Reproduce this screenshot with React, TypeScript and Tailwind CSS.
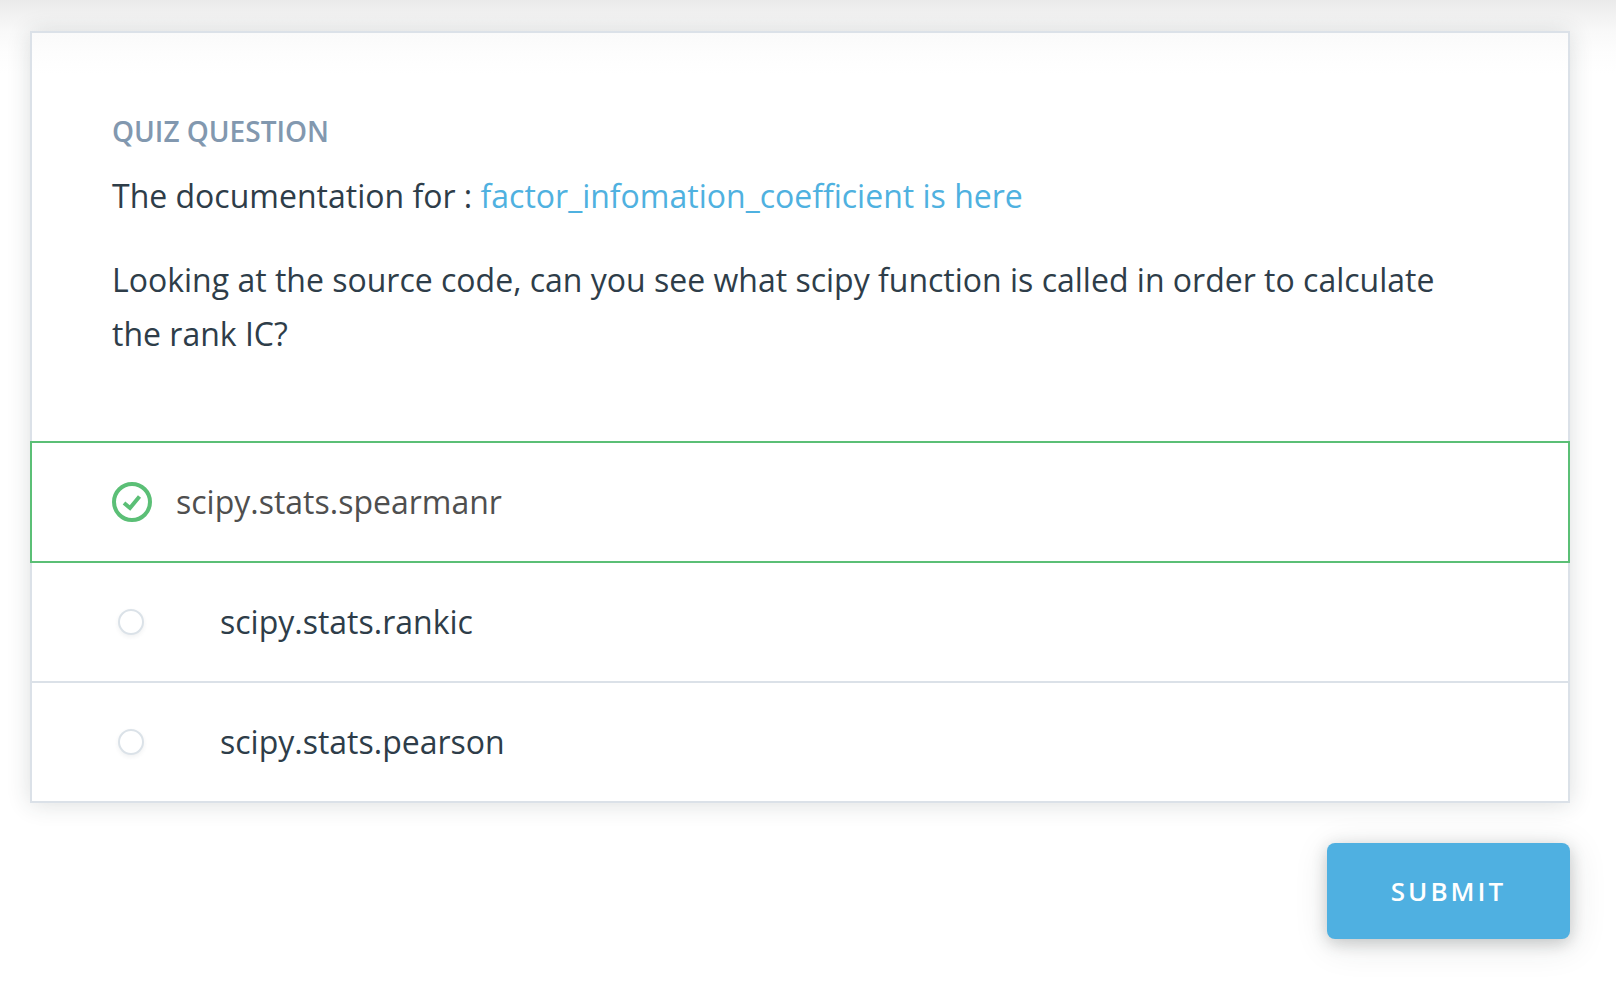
import React from "react";

const options = ["scipy.stats.rankic", "scipy.stats.pearson"];

export default function App() {
  return (
    <main className="min-h-screen bg-white bg-[linear-gradient(to_bottom,#eaeaea_0px,#f2f2f2_16px,#f9f9f9_32px,#fdfdfd_52px,#ffffff_74px)] px-[30px] pt-[31px] pr-[46px] font-['Open_Sans',sans-serif] text-[32px] leading-[54px] text-[#2e3d49]">
      <form onSubmit={(e) => e.preventDefault()}>
        <section className="border-2 border-[#dbe1e8] bg-white bg-[linear-gradient(to_bottom,#fafafa_0px,#fdfdfd_20px,#ffffff_42px)] shadow-[0px_1px_22px_rgba(40,50,52,0.16)]">
          <div className="px-20 pt-[78px] pb-20">
            <h1 className="text-[28px] leading-[40px] font-semibold text-[#8298af]">QUIZ QUESTION</h1>
            <p className="mt-[18px]">
              The documentation for : <a href="#docs" className="text-[#4fb1e0]">factor_infomation_coefficient is here</a>
            </p>
            <p className="mt-[30px]">Looking at the source code, can you see what scipy function is called in order to calculate the rank IC?</p>
          </div>
          <div className="-mx-0.5 flex h-[122px] items-center border-2 border-[#5bbf76] px-20">
            <label className="flex items-center gap-6 text-[#4f4f4f]">
              <input type="radio" name="answer" defaultChecked className="sr-only" />
              <svg viewBox="0 0 40 40" className="size-10" fill="none" stroke="#5bbf76" strokeWidth="4" aria-hidden="true">
                <circle cx="20" cy="20" r="18" />
                <path d="M12 21l6 5L27.5 14.5" />
              </svg>
              scipy.stats.spearmanr
            </label>
          </div>
          {options.map((name) => (
            <label key={name} className="flex h-[120px] items-center border-b-2 border-[#dbe1e8] px-[84px] last:h-[118px] last:border-b-0">
              <input type="radio" name="answer" className="mr-[76px] ml-0.5 size-[26px] appearance-none rounded-full border-2 border-[#dbe2e8] bg-white shadow-[0px_2px_4px_rgba(46,61,73,0.07)]" />
              {name}
            </label>
          ))}
        </section>
        <div className="mt-10 flex justify-end">
          <button type="submit" className="h-24 w-[243px] rounded-lg bg-[#4fb0e1] text-[26px] font-semibold tracking-[3px] text-white shadow-[2px_6px_36px_rgba(40,50,52,0.12),0px_4px_16px_rgba(20,30,28,0.2)]">SUBMIT</button>
        </div>
      </form>
    </main>
  );
}
